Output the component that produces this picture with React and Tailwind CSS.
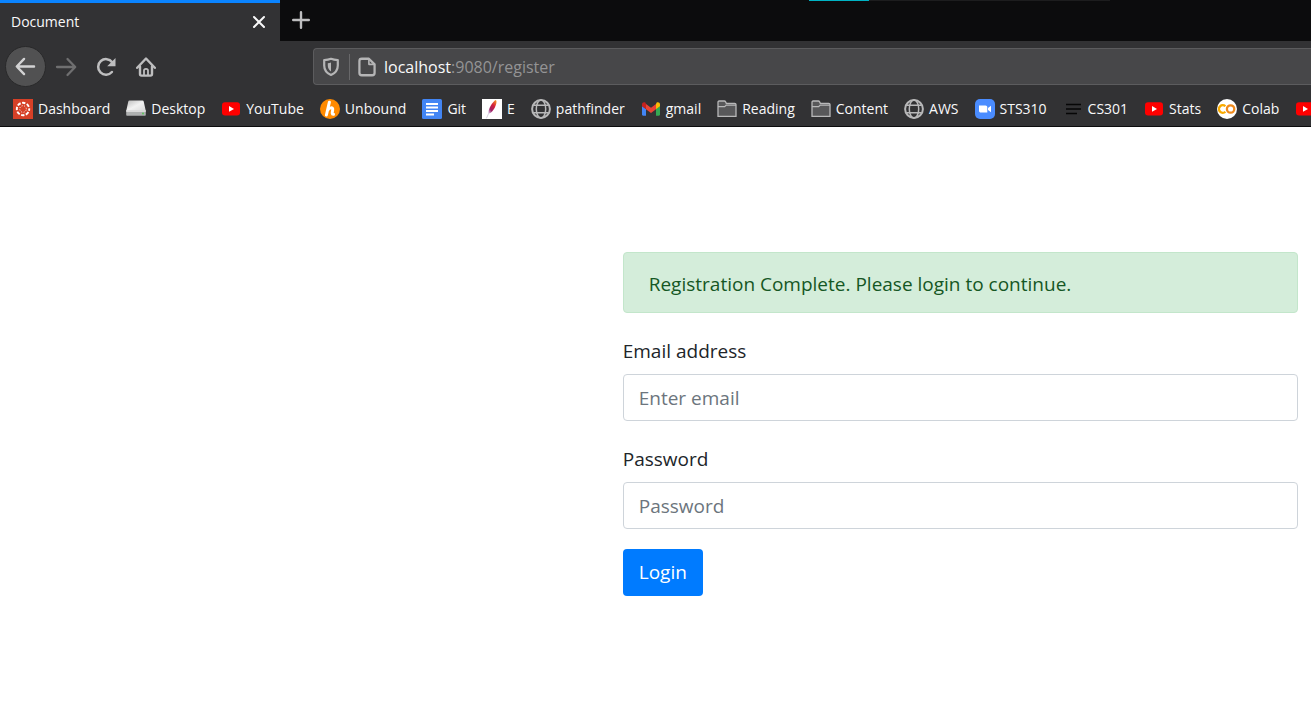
import React from "react";

function CanvasIcon() {
  return (
    <svg width="20" height="20" viewBox="0 0 20 20" aria-hidden="true">
      <rect width="20" height="20" fill="#d64027" />
      <circle cx="10" cy="10" r="6.2" fill="none" stroke="#fff" strokeWidth="1.9" strokeDasharray="3.4 1.47" strokeDashoffset="1.7" />
      <circle cx="10" cy="10" r="3.3" fill="none" stroke="#fff" strokeWidth="1" strokeDasharray="1 1.59" strokeDashoffset="1.8" />
    </svg>
  );
}

function DriveIcon() {
  return (
    <svg width="20" height="20" viewBox="0 0 20 20" aria-hidden="true">
      <defs>
        <linearGradient id="drive-top" x1="0" y1="0" x2="1" y2="1">
          <stop offset="0" stopColor="#bcbcbc" />
          <stop offset="0.5" stopColor="#f2f2f2" />
          <stop offset="1" stopColor="#d8d8d8" />
        </linearGradient>
      </defs>
      <path d="M3.500 1.500h13c.7 0 1.100.3 1.200 1L19.800 12H.2L2.300 2.500c.1-.7.500-1 1.200-1z" fill="url(#drive-top)" />
      <path d="M.2 11.500h19.600V16a.8.8 0 0 1-.8.8H1a.8.8 0 0 1-.8-.8z" fill="#aeb0b0" />
      <path d="M.2 11.500h19.600v1.200H.2z" fill="#ececec" />
      <circle cx="17" cy="14.500" r="1" fill="#58c558" />
    </svg>
  );
}

function YouTubeIcon() {
  return (
    <svg width="20" height="20" viewBox="0 0 20 20" aria-hidden="true">
      <rect x="1" y="3.2" width="18" height="13.4" rx="3" fill="#f00" />
      <path d="M8 7v5.8l5-2.9z" fill="#fff" />
    </svg>
  );
}

function UnboundIcon() {
  return (
    <svg width="20" height="20" viewBox="0 0 20 20" aria-hidden="true">
      <circle cx="10" cy="10" r="10" fill="#ff8a00" />
      <path d="M9.400 3.200 6.400 16M7.500 11.600c1.600-3 5.700-4 5.200-.7-.3 1.800-1.300 4.600.8 4.400" fill="none" stroke="#fff" strokeWidth="3" strokeLinecap="round" />
    </svg>
  );
}

function DocsIcon() {
  return (
    <svg width="20" height="20" viewBox="0 0 20 20" aria-hidden="true">
      <rect width="20" height="20" rx="1.5" fill="#4285f4" />
      <path d="M4 5h12M4 8.500h12M4 12h12M4 15.500h8" stroke="#fff" strokeWidth="2" />
    </svg>
  );
}

function FeatherIcon() {
  return (
    <svg width="20" height="20" viewBox="0 0 20 20" aria-hidden="true">
      <defs>
        <linearGradient id="feather" x1="0.9" y1="0" x2="0.2" y2="1">
          <stop offset="0" stopColor="#f69923" />
          <stop offset="0.4" stopColor="#d3203c" />
          <stop offset="0.75" stopColor="#9e2064" />
          <stop offset="1" stopColor="#c9a6cf" />
        </linearGradient>
      </defs>
      <rect width="20" height="20" fill="#fff" />
      <path d="M13.800.9c1.900 1.800-.5 7.400-2.900 10.700-1.300 1.700-2.900 2.900-4.500 3.300-.2-2.600.6-5.300 2.300-8.200C10.300 4 12.100 1.600 13.800.9z" fill="url(#feather)" />
      <path d="M6.600 14.500 4.400 19.400" stroke="#d7cfe0" strokeWidth="1" />
    </svg>
  );
}

function GlobeIcon() {
  return (
    <svg width="20" height="20" viewBox="0 0 20 20" fill="none" stroke="#b8b8b9" aria-hidden="true">
      <circle cx="10" cy="10" r="8.900" strokeWidth="2" />
      <ellipse cx="10" cy="10" rx="4.700" ry="8.900" strokeWidth="1.500" />
      <path d="M2.500 6.300h15M2.500 13.700h15" strokeWidth="1.500" />
    </svg>
  );
}

function GmailIcon() {
  return (
    <svg width="20" height="20" viewBox="0 0 20 20" aria-hidden="true">
      <path d="M1 7v8.500c0 .7.500 1.200 1.200 1.200H5V10z" fill="#4285f4" />
      <path d="M15 10v6.700h2.800c.7 0 1.200-.5 1.200-1.200V7z" fill="#34a853" />
      <path d="M15 5v5.200l4-3V5.300c0-1.800-2-2.700-3.300-1.700z" fill="#fbbc04" />
      <path d="M5 10.200V5l5 3.800L15 5v5.200L10 14z" fill="#ea4335" />
      <path d="M1 5.300v1.900l4 3V5l-.7-1.400C3 2.600 1 3.500 1 5.300z" fill="#c5221f" />
    </svg>
  );
}

function FolderIcon() {
  return (
    <svg width="20" height="20" viewBox="0 0 20 20" aria-hidden="true">
      <path d="M1 17.300V3.200c0-.7.400-1.200 1.100-1.200h5.200c.6 0 1 .3 1.300.9l.7 1.400h8.400c.7 0 1.300.5 1.300 1.200v11.800z" fill="#58585a" stroke="#b8b8b9" strokeWidth="1.300" />
      <path d="M1 7.700h6.700l1.500-1.500H19" fill="none" stroke="#b8b8b9" strokeWidth="1.200" />
    </svg>
  );
}

function ZoomIcon() {
  return (
    <svg width="20" height="20" viewBox="0 0 20 20" aria-hidden="true">
      <rect width="20" height="20" rx="5" fill="#4a8cff" />
      <path d="M4 6.500h6.500c1 0 1.800.8 1.800 1.800V13.500H5.800c-1 0-1.800-.8-1.800-1.800zM13 9l3-2.300v6.600L13 11z" fill="#fff" />
    </svg>
  );
}

function LinesIcon() {
  return (
    <svg width="20" height="20" viewBox="0 0 20 20" aria-hidden="true">
      <path d="M3 5.500h15M3 10h15M3 14.500h11" stroke="#060606" strokeWidth="1.700" />
    </svg>
  );
}

function ColabIcon() {
  return (
    <svg width="20" height="20" viewBox="0 0 20 20" fill="none" aria-hidden="true">
      <circle cx="10" cy="10" r="10" fill="#fff" />
      <path d="M8.400 7.300a3.800 3.800 0 1 0 0 5.400" stroke="#f9ab00" strokeWidth="2.300" />
      <circle cx="13.600" cy="10" r="3.700" stroke="#f08a1c" strokeWidth="2.300" />
    </svg>
  );
}

const bookmarks = [
  ["Dashboard", CanvasIcon],
  ["Desktop", DriveIcon],
  ["YouTube", YouTubeIcon],
  ["Unbound", UnboundIcon],
  ["Git", DocsIcon],
  ["E", FeatherIcon],
  ["pathfinder", GlobeIcon],
  ["gmail", GmailIcon],
  ["Reading", FolderIcon],
  ["Content", FolderIcon],
  ["AWS", GlobeIcon],
  ["STS310", ZoomIcon],
  ["CS301", LinesIcon],
  ["Stats", YouTubeIcon],
  ["Colab", ColabIcon],
  ["", YouTubeIcon],
];

function TabStrip() {
  return (
    <div className="flex h-[41px] bg-[#0c0c0d]">
      <div className="flex w-[280px] items-center justify-between border-t-3 border-[#0a84ff] bg-[#323234] px-[11px] text-sm text-[#f9f9fa]">
        <span>Document</span>
        <button type="button" aria-label="Close tab" className="flex size-5 items-center justify-center">
          <svg width="14" height="14" viewBox="0 0 14 14" stroke="#f9f9fa" strokeWidth="2" strokeLinecap="round" aria-hidden="true">
            <path d="M2 2l10 10M12 2L2 12" />
          </svg>
        </button>
      </div>
      <button type="button" aria-label="New tab" className="flex h-10 w-[42px] items-center justify-center">
        <svg width="18" height="18" viewBox="0 0 18 18" stroke="#bebebf" strokeWidth="2.400" strokeLinecap="round" aria-hidden="true">
          <path d="M9 1.200v15.600M1.200 9h15.600" />
        </svg>
      </button>
      <div className="mr-[201px] ml-auto flex h-px w-[301px] bg-[#1d1d1e]">
        <div className="w-1/5 bg-[#00b3c4]" />
      </div>
    </div>
  );
}

function NavBar() {
  return (
    <div className="flex h-[51px] items-center pl-[5px]">
      <button type="button" aria-label="Back" className="flex size-[41px] items-center justify-center rounded-full border border-[#29292a] bg-[#515152]">
        <svg width="21" height="19" viewBox="0 0 22 20" fill="none" stroke="#d2d2d3" strokeWidth="2.500" strokeLinecap="round" strokeLinejoin="round" aria-hidden="true">
          <path d="M20 10H2M9.500 2 1.800 10l7.700 8" />
        </svg>
      </button>
      <button type="button" aria-label="Forward" className="flex size-10 items-center justify-center">
        <svg width="22" height="20" viewBox="0 0 22 20" fill="none" stroke="#6f6f70" strokeWidth="2.300" strokeLinecap="round" strokeLinejoin="round" aria-hidden="true">
          <path d="M2 10h18M12.500 2l7.700 8-7.700 8" />
        </svg>
      </button>
      <button type="button" aria-label="Reload" className="flex size-10 items-center justify-center">
        <svg width="20" height="20" viewBox="0 0 20 20" fill="none" aria-hidden="true">
          <path d="M16.200 5.200A7.800 7.800 0 1 0 15.900 15" stroke="#bebebf" strokeWidth="2.500" strokeLinecap="round" />
          <path d="M19.500 1v8.200h-8.300z" fill="#bebebf" />
        </svg>
      </button>
      <button type="button" aria-label="Home" className="flex size-10 items-center justify-center">
        <svg width="20" height="20" viewBox="0 0 20 20" fill="none" stroke="#bebebf" strokeLinecap="round" strokeLinejoin="round" aria-hidden="true">
          <path d="M1.200 10.800 10 1.500l8.800 9.300" strokeWidth="2.400" />
          <path d="M4 9.500V17c0 1 .5 1.600 1.500 1.600h9c1 0 1.500-.6 1.500-1.600V9.500" strokeWidth="2.400" />
          <path d="M8 18v-4.500c0-1 .8-1.600 2-1.600s2 .6 2 1.600V18" strokeWidth="1.800" />
        </svg>
      </button>
      <div className="ml-[147px] flex h-[37px] flex-1 items-center rounded-l-sm border border-r-0 border-[#5c5c5e] bg-[#474749] pl-2">
        <svg width="18" height="20" viewBox="0 0 18 20" fill="none" aria-hidden="true">
          <path d="M9 1.800c2 .8 4.300 1.200 6.800 1.300v5.400c0 4.500-2.300 7.500-6.800 9.500-4.500-2-6.800-5-6.800-9.500V3.100C4.700 3 7 2.600 9 1.800z" stroke="#b5b5b6" strokeWidth="2.200" strokeLinejoin="round" />
          <path d="M9 5.600v8.800c-2.200-1.500-3.200-3.300-3.200-5.900V6.200C7 6.100 8.100 5.900 9 5.600z" fill="#b5b5b6" />
        </svg>
        <div className="ml-[9px] h-[26px] w-px bg-[#68686a]" />
        <svg className="ml-2" width="18" height="20" viewBox="0 0 19 20" fill="none" stroke="#b5b5b6" strokeWidth="2.400" strokeLinejoin="round" aria-hidden="true">
          <path d="M11.500 1.300H4C2.500 1.300 1.500 2.200 1.500 3.700v12.600c0 1.500 1 2.400 2.500 2.400h11c1.500 0 2.500-.9 2.500-2.400V7.200z" />
          <path d="M11.500 1.300v5.900h6" strokeWidth="1.700" />
        </svg>
        <div className="ml-2 text-base text-[#949495]">
          <span className="text-[#f9f9fa]">localhost</span>:9080/register
        </div>
      </div>
    </div>
  );
}

function BookmarksBar() {
  return (
    <nav aria-label="Bookmarks" className="flex h-[35px] gap-4 overflow-hidden border-b border-[#0c0c0d] pl-[13px] text-sm text-[#f9f9fa]">
      {bookmarks.map(([label, Icon], i) => (
        <a key={i} href="#" aria-label={label || "YouTube"} className="flex shrink-0 items-center gap-[5px]">
          <Icon />
          {label && <span>{label}</span>}
        </a>
      ))}
    </nav>
  );
}

function Field({ id, label, type, placeholder }) {
  return (
    <div className="mb-5 flex flex-col">
      <label htmlFor={id} className="mb-[5px] leading-9">{label}</label>
      <input
        id={id}
        type={type}
        placeholder={placeholder}
        className="h-[47px] rounded border border-[#ced4da] bg-white px-[15px] placeholder:text-[#6c757d]"
      />
    </div>
  );
}

export default function App() {
  return (
    <div className="min-h-screen overflow-x-hidden bg-white font-['Open_Sans','Noto_Sans',sans-serif]">
      <header className="bg-[#323234]">
        <TabStrip />
        <NavBar />
        <BookmarksBar />
      </header>
      <main className="mr-[13px] ml-[47.5%] pt-[125px] text-[19px] text-[#212529]">
        <div role="alert" className="mb-5 flex h-[61px] items-center rounded border border-[#c3e6cb] bg-[#d4edda] px-[25px] pt-1 text-[#155724]">
          Registration Complete. Please login to continue.
        </div>
        <form onSubmit={(e) => e.preventDefault()}>
          <Field id="email" label="Email address" type="email" placeholder="Enter email" />
          <Field id="password" label="Password" type="password" placeholder="Password" />
          <button type="submit" className="h-[47px] rounded bg-[#007bff] px-4 text-white">Login</button>
        </form>
      </main>
    </div>
  );
}
